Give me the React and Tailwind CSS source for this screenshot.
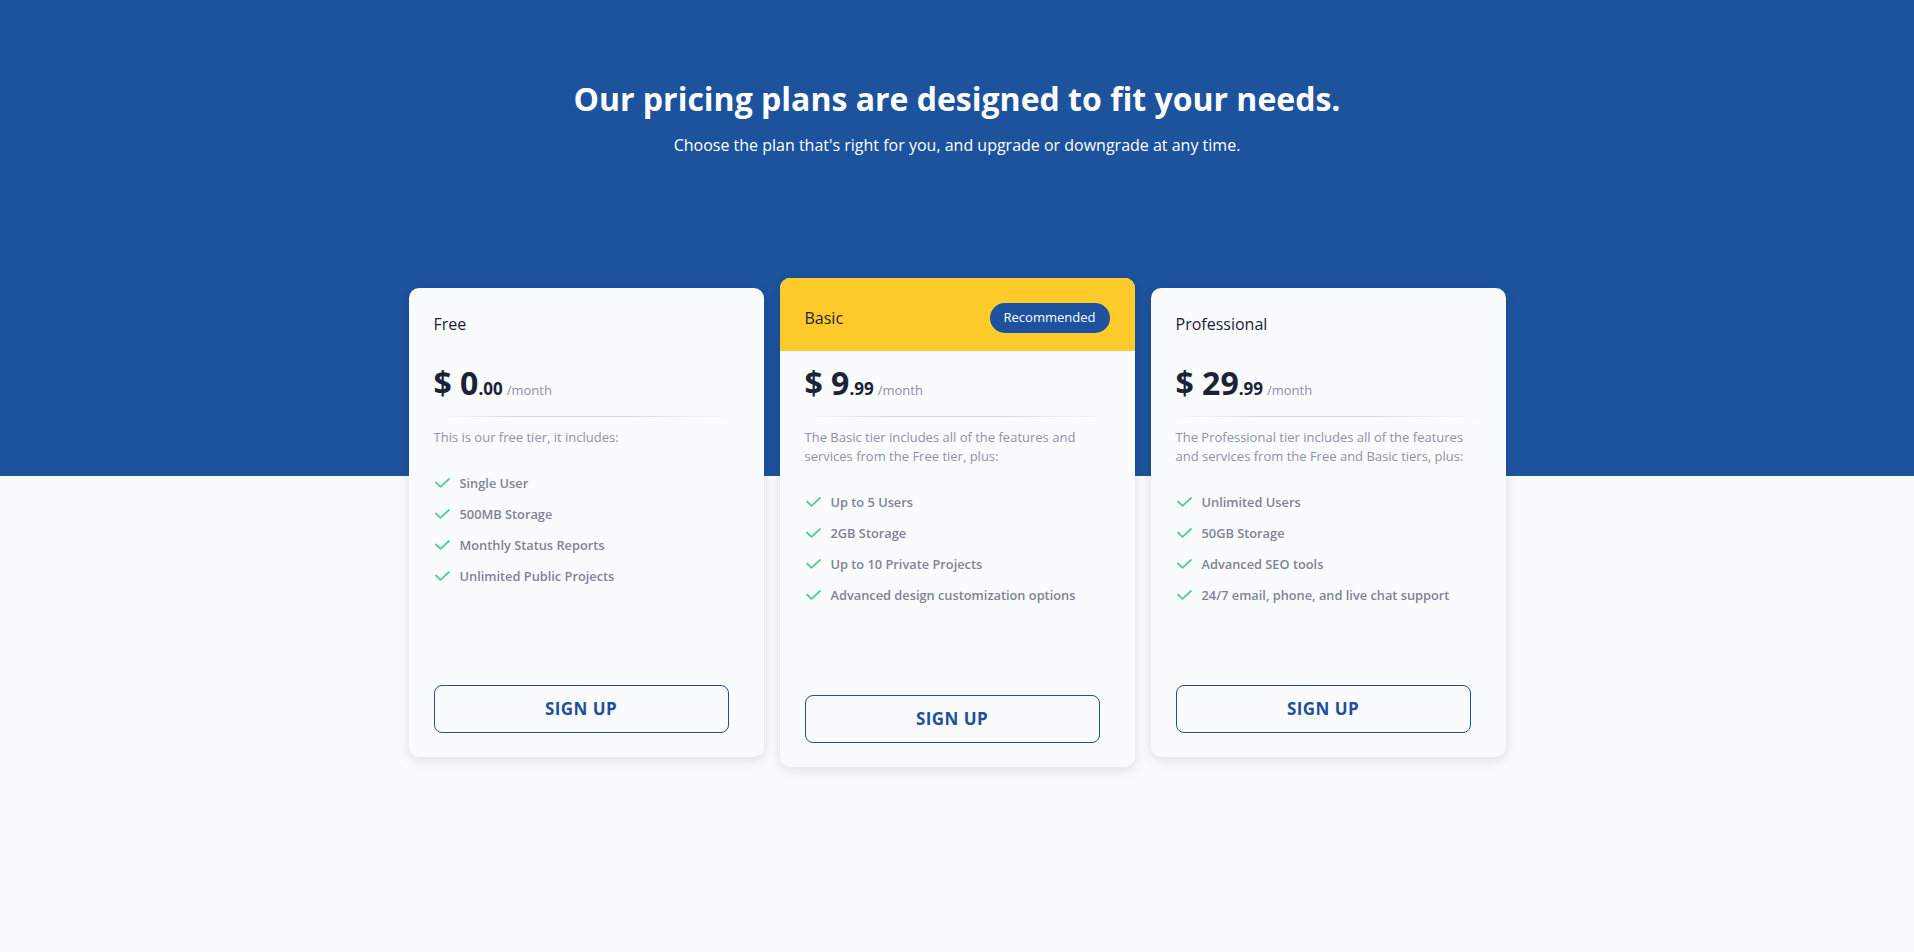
const plans = [
  {
    name: 'Free',
    dollars: '0',
    cents: '.00',
    desc: 'This is our free tier, it includes:',
    features: ['Single User', '500MB Storage', 'Monthly Status Reports', 'Unlimited Public Projects'],
  },
  {
    name: 'Basic',
    dollars: '9',
    cents: '.99',
    recommended: true,
    desc: 'The Basic tier includes all of the features and services from the Free tier, plus:',
    features: ['Up to 5 Users', '2GB Storage', 'Up to 10 Private Projects', 'Advanced design customization options'],
  },
  {
    name: 'Professional',
    dollars: '29',
    cents: '.99',
    desc: 'The Professional tier includes all of the features and services from the Free and Basic tiers, plus:',
    features: ['Unlimited Users', '50GB Storage', 'Advanced SEO tools', '24/7 email, phone, and live chat support'],
  },
]

function Check() {
  return (
    <svg width="15" height="10" viewBox="0 0 15 10" fill="none">
      <polyline points="1,4.5 5.5,8.8 14,1" stroke="#4fcf93" strokeWidth="1.8" strokeLinecap="round" strokeLinejoin="round" />
    </svg>
  )
}

function PlanCard({ plan }) {
  return (
    <div
      className={`w-[355px] flex flex-col rounded-[10px] overflow-hidden bg-[#fafbfd] shadow-[0_3px_12px_rgba(0,0,0,0.11)] ${
        plan.recommended ? 'h-[489px]' : 'h-[469px]'
      }`}
    >
      {plan.recommended ? (
        <div className="h-[73px] pt-[7px] px-[25px] flex items-center justify-between bg-[#ffcb2a]">
          <h3 className="text-base text-[#1f2233]">{plan.name}</h3>
          <span className="w-[120px] h-[30px] flex items-center justify-center rounded-full bg-[#1e529e] text-[13px] text-white">
            Recommended
          </span>
        </div>
      ) : (
        <div className="h-[63px] px-[25px] pt-6">
          <h3 className="text-base leading-6 text-[#1f2233]">{plan.name}</h3>
        </div>
      )}

      <div className="flex-1 flex flex-col px-[25px] pb-6">
        <div className="mt-3 flex items-baseline text-[#1c2237] font-bold">
          <span className="text-[32px] leading-[40px]">$ {plan.dollars}</span>
          <span className="text-[17px]">{plan.cents}</span>
          <span className="ml-[4px] text-[13px] font-normal text-[#8d91a5]">/month</span>
        </div>

        <div className="mt-[13px] h-px bg-[linear-gradient(to_right,rgba(214,216,222,0),#d4d6dc_30%,#d4d6dc_60%,rgba(214,216,222,0))]" />

        <p className="mt-[11px] text-[13px] leading-[19px] text-[#8e92a6]">{plan.desc}</p>

        <ul className="mt-[26px] flex flex-col gap-[11px]">
          {plan.features.map((f) => (
            <li key={f} className="flex items-center gap-[10px] text-[12.8px] leading-5 font-semibold text-[#7e8397]">
              <span className="ml-px flex w-[15px] justify-center">
                <Check />
              </span>
              {f}
            </li>
          ))}
        </ul>

        <button className="mt-auto w-[295px] h-12 rounded-lg border border-[#1e4f9c] text-[17px] font-bold tracking-wide text-[#1e4f9c]">
          SIGN UP
        </button>
      </div>
    </div>
  )
}

export default function App() {
  return (
    <div
      className="min-h-screen bg-[linear-gradient(to_bottom,#1d529d_476px,#f9fafc_476px)]"
      style={{ fontFamily: '"Open Sans", sans-serif' }}
    >
      <div className="pt-[79px] text-center text-white">
        <h1 className="text-[32px] leading-[40px] font-bold">Our pricing plans are designed to fit your needs.</h1>
        <p className="mt-[14px] text-base leading-6">
          Choose the plan that's right for you, and upgrade or downgrade at any time.
        </p>
      </div>

      <div className="mt-[121px] flex justify-center items-center gap-4">
        {plans.map((p) => (
          <PlanCard key={p.name} plan={p} />
        ))}
      </div>
    </div>
  )
}
